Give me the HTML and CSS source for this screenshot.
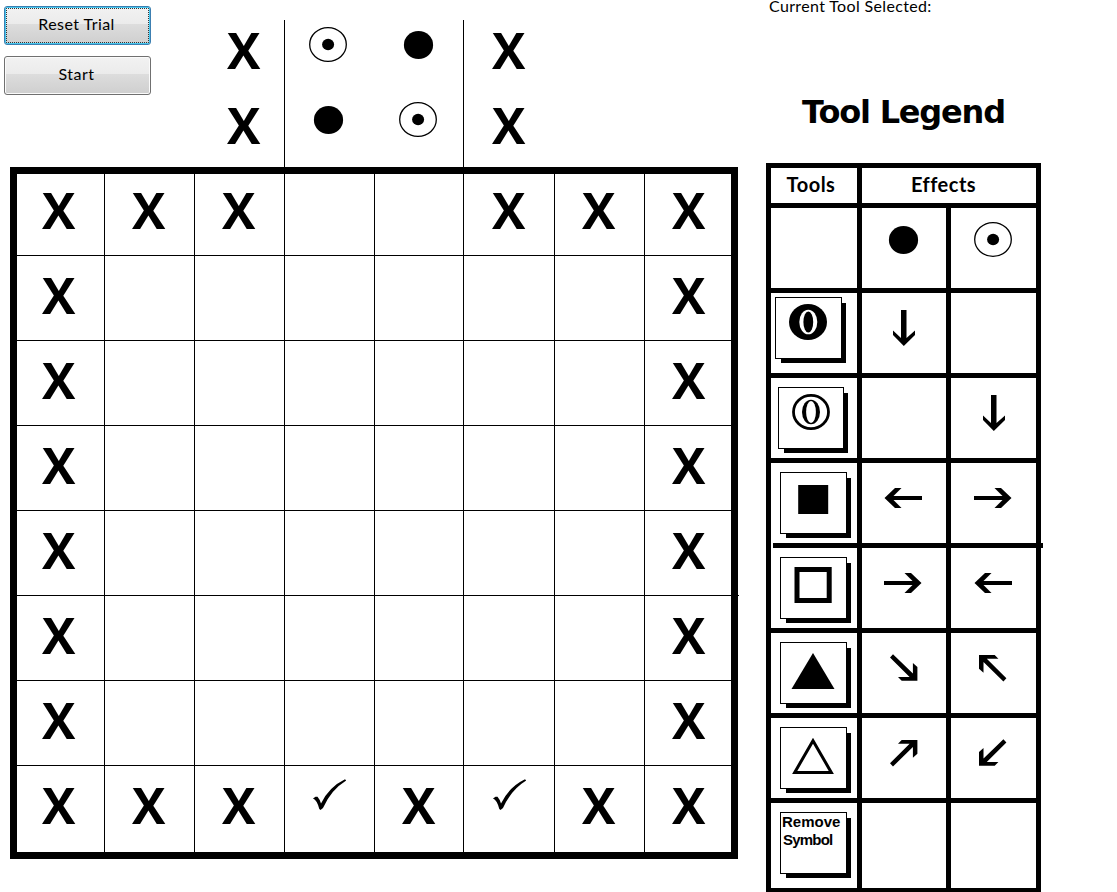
FILE: index.html
```html
<!DOCTYPE html>
<html lang="en">
<head>
<meta charset="utf-8">
<title>Tool Trial</title>
<link rel="stylesheet" href="styles.css">
</head>
<body>
<svg class="defs" width="0" height="0">
  <symbol id="disc" overflow="visible"><ellipse cx="41.5" cy="32" rx="14.6" ry="14.1"/></symbol>
  <symbol id="dot" overflow="visible"><ellipse cx="41" cy="31.5" rx="18.3" ry="16.9" fill="none" stroke="#000" stroke-width="1.3"/><ellipse cx="41.1" cy="31.5" rx="6" ry="5.8"/></symbol>
  <symbol id="down" overflow="visible"><path d="M39 17H44.5V45L53 37.5V42L41.8 53L31 42V37.5L39 45Z"/></symbol>
  <symbol id="left" overflow="visible"><path d="M60 33V37H31.5L39.5 45H33L22.5 35L33 25H39.5L31.5 33Z"/></symbol>
  <symbol id="right" overflow="visible"><path d="M22 33V37H50.5L42.5 45H49L59.5 35L49 25H42.5L50.5 33Z"/></symbol>
  <symbol id="diag" overflow="visible"><path d="M31 21.2L50.9 40.6V30L55.4 34V47.7H39.7L36 44H47.6L28 24.4Z"/></symbol>
  <symbol id="check" overflow="visible"><path d="M28 36.5L30.5 34.8H32.5Q34.5 37 36 41.5Q44 25 60 17.3L61.2 18.6Q46 28 38 46L35.5 48L34.3 47Q32 38 28 36.5Z"/></symbol>
</svg>
<main class="app">
  <section class="play">
    <div class="top">
      <div class="buttons">
        <button class="btn focused">Reset Trial</button>
        <button class="btn">Start</button>
      </div>
      <div class="entry">
        <div class="wall"><b>X</b></div>
        <div><svg><use href="#dot"/></svg></div>
        <div class="wall"><svg><use href="#disc"/></svg></div>
        <div><b>X</b></div>
        <div class="wall"><b>X</b></div>
        <div><svg><use href="#disc"/></svg></div>
        <div class="wall"><svg><use href="#dot"/></svg></div>
        <div><b>X</b></div>
      </div>
    </div>
    <div class="board">
      <div class="row first"><i><b>X</b></i><i><b>X</b></i><i><b>X</b></i><i></i><i></i><i><b>X</b></i><i><b>X</b></i><i><b>X</b></i></div>
      <div class="row"><i><b>X</b></i><i></i><i></i><i></i><i></i><i></i><i></i><i><b>X</b></i></div>
      <div class="row"><i><b>X</b></i><i></i><i></i><i></i><i></i><i></i><i></i><i><b>X</b></i></div>
      <div class="row"><i><b>X</b></i><i></i><i></i><i></i><i></i><i></i><i></i><i><b>X</b></i></div>
      <div class="row long"><i><b>X</b></i><i></i><i></i><i></i><i></i><i></i><i></i><i><b>X</b></i></div>
      <div class="row"><i><b>X</b></i><i></i><i></i><i></i><i></i><i></i><i></i><i><b>X</b></i></div>
      <div class="row"><i><b>X</b></i><i></i><i></i><i></i><i></i><i></i><i></i><i><b>X</b></i></div>
      <div class="row"><i><b>X</b></i><i><b>X</b></i><i><b>X</b></i><i><svg><use href="#check"/></svg></i><i><b>X</b></i><i><svg><use href="#check"/></svg></i><i><b>X</b></i><i><b>X</b></i></div>
    </div>
  </section>
  <section class="side">
    <p class="current">Current Tool Selected:</p>
    <h1>Tool Legend</h1>
    <div class="legend">
      <div class="head">Tools</div>
      <div class="head effects">Effects</div>

      <div></div>
      <div><svg><use href="#disc"/></svg></div>
      <div class="b"><svg><use href="#dot"/></svg></div>

      <div><div class="tool t1"><svg viewBox="775 297 67 62"><ellipse cx="808" cy="322" rx="19" ry="18"/><ellipse cx="808.3" cy="322" rx="9" ry="12.3" fill="#fff"/><ellipse cx="808.3" cy="322" rx="4.9" ry="10.6"/></svg></div></div>
      <div><svg><use href="#down"/></svg></div>
      <div class="b"></div>

      <div><div class="tool t2"><svg viewBox="778 387 66 62"><ellipse cx="811" cy="412" rx="17.5" ry="16.6" fill="none" stroke="#000" stroke-width="2.8"/><ellipse cx="811" cy="412" rx="9" ry="12.2"/><ellipse cx="811" cy="412" rx="4.9" ry="10.9" fill="#fff"/></svg></div></div>
      <div></div>
      <div class="b"><svg><use href="#down"/></svg></div>

      <div class="open"><div class="tool"><svg viewBox="780 472 67 62"><rect x="798.2" y="485" width="30" height="29"/></svg></div></div>
      <div><svg><use href="#left"/></svg></div>
      <div class="b"><svg><use href="#right"/></svg></div>

      <div><div class="tool"><svg viewBox="780 557 67 62"><rect x="797" y="569.5" width="32.2" height="31" fill="none" stroke="#000" stroke-width="5"/></svg></div></div>
      <div><svg><use href="#right"/></svg></div>
      <div class="b"><svg><use href="#left"/></svg></div>

      <div><div class="tool"><svg viewBox="780 642 67 62"><path d="M813 653L834.5 689H791.5Z"/></svg></div></div>
      <div><svg><use href="#diag"/></svg></div>
      <div class="b"><svg><use href="#diag" transform="translate(82.4 69.7) scale(-1 -1)"/></svg></div>

      <div><div class="tool"><svg viewBox="780 727 67 62"><path d="M813 740.8L831.3 772.4H794.7Z" fill="none" stroke="#000" stroke-width="3"/></svg></div></div>
      <div><svg><use href="#diag" transform="translate(0 69.7) scale(1 -1)"/></svg></div>
      <div class="b"><svg><use href="#diag" transform="translate(82.4 0) scale(-1 1)"/></svg></div>

      <div><div class="tool remove"><span>Remove</span><span class="tight">Symbol</span></div></div>
      <div></div>
      <div class="b"></div>
    </div>
  </section>
</main>
</body>
</html>
```
FILE: styles.css
```css
* { box-sizing: border-box; }
body { margin: 0; background: #fff; color: #000; font-family: Lato, sans-serif; }
.defs { position: absolute; }
.app { display: flex; gap: 28px; width: 1117px; height: 892px; overflow: hidden; }
svg { display: block; overflow: visible; }

.play { width: 738px; flex: none; }
.top { display: flex; height: 167px; }
.buttons { display: flex; flex-direction: column; gap: 11px; width: 195px; padding: 6px 0 0 4px; }
.btn {
  width: 147px; height: 39px; padding: 0 2px 4px 0;
  border: 1px solid #707070; border-radius: 3px;
  background: linear-gradient(#f2f2f2 0%, #ebebeb 45%, #dddddd 45%, #cfcfcf 100%);
  box-shadow: inset 0 0 0 1px #fbfbfb;
  font: 16px/20px Lato, sans-serif; letter-spacing: 0.45px; color: #000;
}
.focused {
  border-color: #3c7fb1; box-shadow: inset 0 0 0 1px #46c8f0;
  outline: 1px dotted #333; outline-offset: -3px;
}

.entry { display: grid; grid-template-columns: 90px 90px 89px 91px; grid-template-rows: 75px 72px; margin-top: 20px; }
.entry svg { margin: -7px 0 0 2px; width: 80px; height: 70px; }
.wall { border-right: 1px solid #000; }

b { display: block; width: 34px; margin: 14px 0 0 27px; font: bold 50px/50px "Open Sans", sans-serif; }
.entry b { margin: 5px 0 0 28px; }
.entry > :nth-child(4n+1) b { margin-left: 32px; }

.board { width: 728px; height: 692px; margin-left: 10px; border: 7px solid #000; }
.row {
  display: grid; grid-template-columns: 88px 90px 90px 90px 89px 91px 90px 86px;
  height: 85px; position: relative;
}
.row i { border-right: 1px solid #000; border-bottom: 1px solid #000; min-width: 0; }
.row i:last-child { border-right: 0; }
.row:last-child i { border-bottom: 0; }
.row:last-child { height: 86px; }
.row svg { width: 80px; height: 80px; margin-top: -4px; }
.row i:nth-child(6) svg { margin-left: 1px; }
.first { height: 82px; }
.first b { margin-top: 11px; }
.row i:first-child b { margin-left: 25px; }
.row i:nth-child(6) b { margin-left: 28px; }
.long::after { content: ""; position: absolute; right: -8px; bottom: 0; width: 8px; height: 1px; background: #000; }

.side { width: 277px; flex: none; }
.current { margin: 0 0 0 3px; height: 92px; font-size: 16px; letter-spacing: 0.35px; line-height: 12px; white-space: nowrap; }
h1 { margin: 0 0 0 36px; height: 71px; font: bold 32px/40px "DejaVu Sans", sans-serif; letter-spacing: -1.2px; white-space: nowrap; }
.legend {
  display: grid; width: 275px; padding: 5px; gap: 5px; background: #000;
  grid-template-columns: 86px 84px 85px; grid-template-rows: 35px repeat(7, 80px) 85px;
}
.legend > div { background: #fff; min-width: 0; }
.legend > div > svg { width: 80px; height: 80px; }
.legend > .b > svg { margin-left: 1px; }
.legend > div { display: flex; align-items: flex-start; }
.legend > .head { display: block; padding-right: 6px; text-align: center; font: bold 20px/32px Lato, sans-serif; letter-spacing: 0.5px; }
.legend > .effects { grid-column: span 2; padding-right: 11px; }
.open { position: relative; }
.open::before { content: ""; position: absolute; left: 0; bottom: -5px; width: 2px; height: 5px; background: #fff; }
.open::after { content: ""; position: absolute; left: 265px; bottom: -5px; width: 7px; height: 5px; background: #000; }
.tool { width: 67px; height: 62px; margin: 9px 0 0 9px; border: 1px solid #000; background: #fff; box-shadow: 5px 5px 0 -1px #000; }
.tool svg { width: 67px; height: 62px; margin: -1px; }
.t1 { margin: 4px 0 0 4px; }
.t2 { width: 66px; margin-left: 7px; }
.t2 svg { width: 66px; }
.remove { padding-left: 1px; font: bold 15px/18px "Liberation Sans", sans-serif; }
.remove span { display: block; }
.tight { padding-left: 1px; letter-spacing: -0.8px; }
```
